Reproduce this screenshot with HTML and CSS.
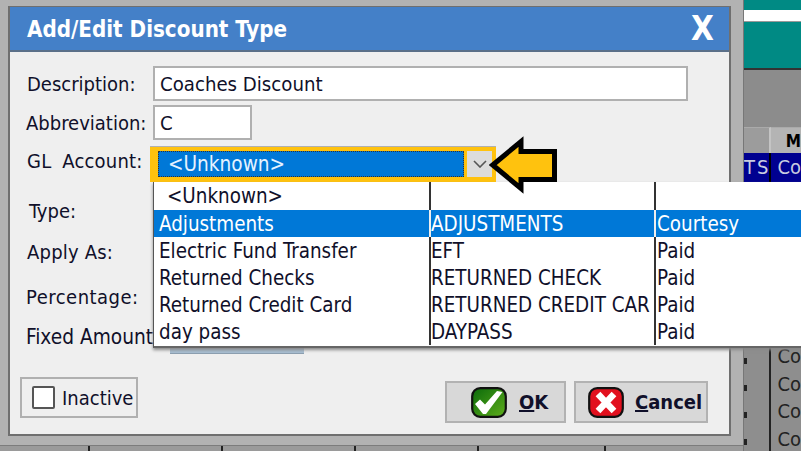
FILE: index.html
```html
<!DOCTYPE html>
<html lang="en">
<head>
<meta charset="utf-8">
<title>Add/Edit Discount Type</title>
<link rel="stylesheet" href="styles.css">
</head>
<body>
<div class="desktop">
  <div class="under-strip"><span></span><span></span><span></span><span></span><span></span></div>

  <aside class="backdrop">
    <div class="teal"><div class="teal-input"></div></div>
    <div class="grey-panel"></div>
    <div class="grid-head"><span class="hd hd-a"></span><span class="hd hd-b">M</span></div>
    <div class="grid-sel"><span class="sel-a">TS</span><span class="sel-b">Co</span></div>
    <div class="grid-body">
      <div class="col-a"></div>
      <div class="col-b"><span>Co</span><span>Co</span><span>Co</span><span>Co</span></div>
    </div>
  </aside>

  <section class="dialog">
    <header class="title"><h1>Add/Edit Discount Type</h1><span class="close">X</span></header>
    <div class="body">
      <div class="row row-desc"><label>Description:</label><div class="input input-wide">Coaches Discount</div></div>
      <div class="row row-abbr"><label>Abbreviation:</label><div class="input input-small">C</div></div>
      <div class="row row-gl"><label>GL Account:</label>
        <div class="combo"><div class="combo-value">&lt;Unknown&gt;</div><div class="combo-btn"><svg width="14" height="8" viewBox="0 0 14 8"><path d="M1 1l6 6 6-6" fill="none" stroke="#555" stroke-width="1.6"/></svg></div></div>
      </div>
      <div class="row row-type"><label>Type:</label></div>
      <div class="row row-apply"><label>Apply As:</label></div>
      <div class="row row-pct"><label>Percentage:</label></div>
      <div class="row row-fixed"><label>Fixed Amount:</label><div class="fixed-input"></div></div>
      <div class="footer">
        <div class="check"><span class="box"></span><span>Inactive</span></div>
        <div class="buttons">
          <button class="btn btn-ok"><svg class="ico" width="36" height="31" viewBox="0 0 36 31"><defs><linearGradient id="g" x1="0" y1="0" x2="1" y2="1"><stop offset="0" stop-color="#0a6a0a"/><stop offset="1" stop-color="#5fae1c"/></linearGradient></defs><rect x="1.2" y="1.2" width="33.6" height="28.6" rx="8" fill="url(#g)" stroke="#111" stroke-width="2.2"/><path d="M4 17L9 12.5L14 17.5L26 4L31.5 5L15 27H12Z" fill="#fff"/></svg><span><u>O</u>K</span></button>
          <button class="btn btn-cancel"><svg class="ico" width="36" height="31" viewBox="0 0 36 31"><rect x="1.2" y="1.2" width="33.6" height="28.6" rx="8" fill="#e2101e" stroke="#111" stroke-width="2.2"/><path d="M10 7l16 17M26 7L10 24" fill="none" stroke="#fff" stroke-width="6.5"/></svg><span><u>C</u>ancel</span></button>
        </div>
      </div>
    </div>
  </section>

  <div class="dropdown">
    <div class="dd-row dd-first"><span class="c1 indent">&lt;Unknown&gt;</span><span class="c2"></span><span class="c3"></span></div>
    <div class="dd-row dd-sel"><span class="c1">Adjustments</span><span class="c2">ADJUSTMENTS</span><span class="c3">Courtesy</span></div>
    <div class="dd-row"><span class="c1">Electric Fund Transfer</span><span class="c2">EFT</span><span class="c3">Paid</span></div>
    <div class="dd-row"><span class="c1">Returned Checks</span><span class="c2">RETURNED CHECK</span><span class="c3">Paid</span></div>
    <div class="dd-row"><span class="c1">Returned Credit Card</span><span class="c2">RETURNED CREDIT CAR</span><span class="c3">Paid</span></div>
    <div class="dd-row"><span class="c1">day pass</span><span class="c2">DAYPASS</span><span class="c3">Paid</span></div>
  </div>

  <svg class="arrow" width="70" height="64" viewBox="0 0 70 64"><path d="M3.7 32L32 8.5V18.5H65.5V46.5H32V55.5Z" fill="#ffc20e" stroke="#000" stroke-width="5"/></svg>
</div>
</body>
</html>
```
FILE: styles.css
```css
* { box-sizing: border-box; }
html, body { margin: 0; padding: 0; }
body { width: 801px; height: 451px; overflow: hidden; background: #b2b2b2; font-family: "DejaVu Sans Condensed", "DejaVu Sans", sans-serif; color: #10102a; }
.desktop { position: relative; width: 801px; height: 451px; overflow: hidden; }

.under-strip { position: absolute; left: 0; bottom: 0; width: 743px; height: 6px; display: flex; background: #9a9a9a; border-top: 1px solid #7c7c7c; }
.under-strip span { height: 5px; border-right: 2px solid #222; width: 133px; }
.under-strip span:first-child { width: 90px; }
.under-strip span:nth-child(4) { width: 123px; }
.under-strip span:nth-child(5) { width: 127px; }

.backdrop { position: absolute; left: 743px; top: 0; width: 58px; height: 451px; display: flex; flex-direction: column; background: #8e8e8e; border-left: 1px solid #777; }
.teal { height: 70px; flex: none; padding-top: 10px; background: #008a84; border-bottom: 2px solid #333; }
.teal-input { height: 12px; background: #fff; border-bottom: 1px solid #999; }
.grey-panel { height: 57px; flex: none; background: #8c8c8c; }
.grid-head { display: flex; height: 26px; flex: none; background: #9c9c9c; }
.hd { border-top: 1px solid #aaa; }
.hd-a { width: 33px; border-right: 2px solid #c4c4c4; }
.hd-b { flex: 1; padding: 3px 0 0 15px; font-weight: 700; font-size: 17px; color: #000; background: #b4b4b4; }
.grid-sel { display: flex; height: 29px; flex: none; background: #000090; color: #c8cce0; font-size: 20px; line-height: 28px; }
.sel-a { width: 33px; text-align: right; padding-right: 11px; letter-spacing: 2px; border-right: 2px solid #000; white-space: nowrap; overflow: hidden; }
.sel-b { flex: 1; padding-left: 6px; }
.grid-body { flex: 1; display: flex; }
.col-a { width: 33px; border-right: 2px solid #222; background: repeating-linear-gradient(to bottom, transparent 0 14px, #222 14px 20px, transparent 20px 27px) 0 0 / 3px 100% no-repeat; }
.col-b { flex: 1; display: flex; flex-direction: column; padding: 161px 0 0 6px; font-size: 20px; line-height: 27.5px; color: #222; }

.dialog { position: absolute; left: 8px; top: 6px; width: 723px; height: 430px; display: flex; flex-direction: column; background: #efefef; border: 2px solid #6f6f6f; border-top-width: 1px; }
.title { height: 45px; flex: none; display: flex; align-items: center; justify-content: space-between; padding: 0 15px 0 17px; background: #4480c8; border-bottom: 2px solid #5a6f88; color: #fff; }
.title h1 { margin: 0; font-size: 22.2px; font-weight: 700; }
.close { font-size: 33px; font-weight: 700; line-height: 1; }

.body { flex: 1; display: flex; flex-direction: column; padding: 14px 0 0 17px; font-size: 20px; line-height: 24px; }
.row { display: flex; align-items: center; }
.row label { width: 126px; flex: none; white-space: nowrap; }
.input { height: 35px; background: #fff; border: 2px solid #b0b0b0; display: flex; align-items: center; padding-left: 5px; font-size: 20.2px; }
.input-wide { width: 535px; }
.input-small { width: 99px; }
.row-abbr { margin-top: 4px; }
.row-abbr label { margin-left: -1px; margin-right: 1px; }
.row-gl { margin-top: 6px; height: 36px; }
.row-gl label { padding-bottom: 6px; letter-spacing: .2px; word-spacing: 5px; }
.row-type { margin-top: 17px; }
.row-type label { padding-left: 2px; }
.row-apply { margin-top: 17px; }
.row-apply label { letter-spacing: .2px; }
.row-pct { margin-top: 21px; }
.row-pct label { margin-left: -1px; letter-spacing: .5px; }
.row-fixed { margin-top: 16px; height: 24px; }
.row-fixed label { margin-left: -1px; margin-right: 1px; font-size: 20.7px; }
.fixed-input { align-self: flex-start; flex: none; height: 11px; width: 134px; margin: 18px 0 0 17px; background: #a8bed2; border-bottom: 1px solid #8c9fb0; }

.footer { margin-top: auto; display: flex; justify-content: space-between; align-items: flex-end; padding: 0 21px 11px 0; }
.check { display: flex; align-items: center; gap: 7px; width: 118px; height: 41px; padding-left: 10px; border: 2px solid #b0b0b0; margin-left: -7px; margin-bottom: 5px; }
.box { width: 23px; height: 23px; flex: none; background: #fff; border: 2px solid #555; border-radius: 2px; }
.buttons { display: flex; gap: 8px; }
.btn { display: flex; align-items: center; justify-content: flex-start; gap: 12px; height: 42px; background: #d8d8d8; border: 2px solid #b2b2b2; font: 700 20px "DejaVu Sans Condensed", "DejaVu Sans", sans-serif; color: #10102a; padding: 0 0 0 24px; }
.btn-ok { width: 121px; }
.btn-cancel { width: 134px; padding-left: 12px; gap: 11px; }

.combo { flex: none; margin-left: -3px; width: 346px; height: 36px; background: #ffc20e; border-top: 1px solid #b0b0b0; padding: 4px 4px 5px 8px; display: flex; gap: 3px; }
.combo-value { width: 306px; background: #0078d7; color: #e6f2ff; padding-left: 9px; line-height: 24px; border: 1px dotted #333; font-size: 20.6px; }
.combo-btn { flex: 1; background: #dcdcdc; display: flex; align-items: center; justify-content: center; }

.dropdown { position: absolute; left: 153px; top: 182px; width: 660px; height: 166px; background: #fff; border-left: 1px solid #555; border-bottom: 2px solid #666; box-shadow: 0 2px 3px #888; font-size: 20.4px; color: #10102a; }
.dd-row { display: flex; height: 27px; line-height: 29px; }
.dd-first { height: 28px; }
.dd-sel { background: #0078d7; color: #fff; }
.c1, .c2, .c3 { overflow: hidden; white-space: nowrap; }
.c1 { width: 275px; padding-left: 5px; }
.c1.indent { padding-left: 13px; }
.c2 { width: 225px; border-left: 2px solid #333; padding-left: 0; }
.c3 { flex: 1; border-left: 2px solid #333; padding-left: 1px; }
.dd-sel .c2, .dd-sel .c3 { border-left-color: #eee; }

.arrow { position: absolute; left: 489px; top: 133px; }
```
